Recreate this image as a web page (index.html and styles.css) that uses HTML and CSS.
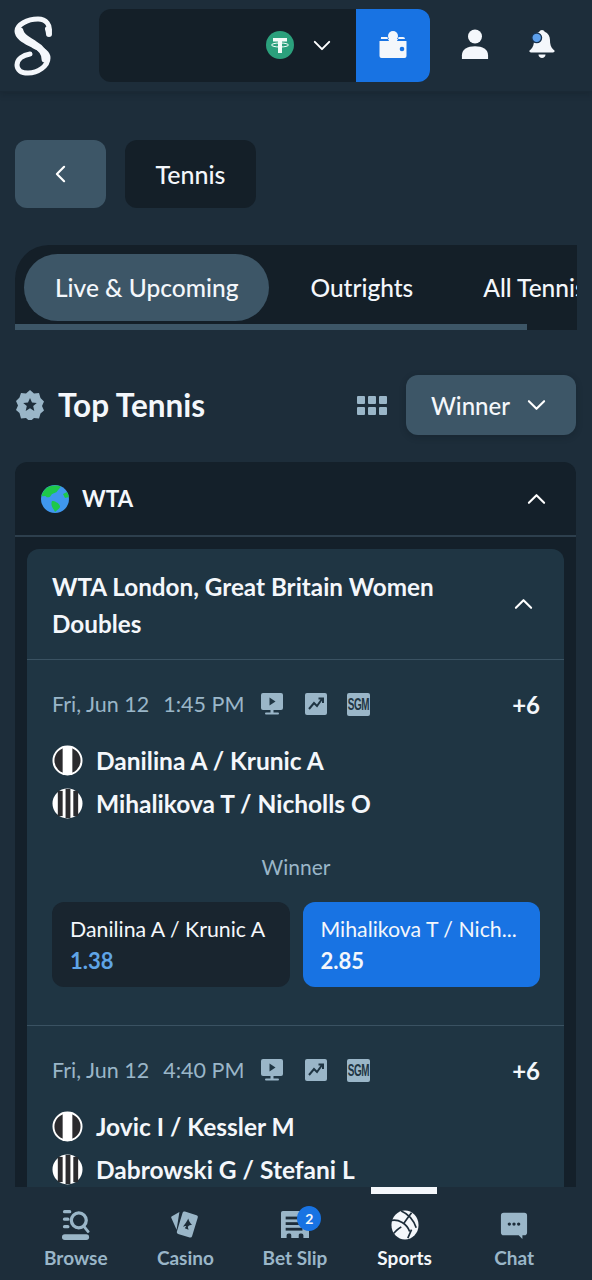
FILE: index.html
```html
<!DOCTYPE html>
<html lang="en">
<head>
    <meta charset="UTF-8">
    <meta name="viewport" content="width=device-width, initial-scale=1.0">
    <title>Top Tennis</title>
    <link rel="stylesheet" href="styles.css">
</head>
<body>
    <header class="topbar">
        <svg class="logo" viewBox="0 0 38 60" fill="none" stroke="#f4f7fb" stroke-width="5" stroke-linecap="round">
            <path d="M35 17C37 9 32 3 24 3C13 3 3 9 3 15C3 22 13 26 20 30C28 34 34 36 34 42C34 50 24 57 14 57C7 57 3 54 3 49C3 43 9 39 16 38"/>
            <path d="M6 15C7 21 14 24 20 28C27 32 31 37 31 43" stroke-width="7"/>
            <path d="M34 13C35 16 35 17 35 18" stroke-width="6"/>
        </svg>
        <div class="wallet">
            <div class="balance">
                <svg class="tether" viewBox="0 0 28 28">
                    <circle cx="14" cy="14" r="14" fill="#2ba07c"/>
                    <path d="M7 7h14v3.500h-5V22h-4V10.500H7z" fill="#f3fbf8"/>
                    <ellipse cx="14" cy="14" rx="8.500" ry="2" fill="none" stroke="#f3fbf8" stroke-width="1"/>
                </svg>
                <svg class="chev-sm" viewBox="0 0 20 12" fill="none" stroke="#fff" stroke-width="2.200" stroke-linecap="round" stroke-linejoin="round">
                    <path d="M2 2l8 8 8-8"/>
                </svg>
            </div>
            <div class="wallet-btn">
                <svg class="wallet-ico" viewBox="0 0 30 30">
                    <circle cx="15" cy="6" r="5" fill="#f4f7fb"/>
                    <path d="M3 7h6.500a5.500 5.500 0 0 0 11 0H25a2 2 0 0 1 2 2H3a2 2 0 0 1 0-1.500z" fill="#f4f7fb"/>
                    <path d="M1.500 11H28a.5.5 0 0 1 .5.5V26a2 2 0 0 1-2 2h-23a2 2 0 0 1-2-2z" fill="#f4f7fb"/>
                    <circle cx="24" cy="19" r="2.300" fill="#1873e3"/>
                </svg>
            </div>
        </div>
        <svg class="top-ico user-ico" viewBox="0 0 30 32" fill="#f4f7fb">
            <circle cx="15" cy="8" r="7.500"/>
            <path d="M1 32v-4c0-6 6-9.500 14-9.500S29 22 29 28v4z"/>
        </svg>
        <svg class="top-ico bell-ico" viewBox="0 0 30 34">
            <path d="M15 1c1.500 0 2.500 1 3 2 4 1.500 6 5 6 9 0 5 1 9 4 11.500 2 1 1.500 3-.5 3h-25c-2 0-2.500-2-.5-3C5 21 6 17 6 12c0-4 2-7.500 6-9 .5-1 1.500-2 3-2z" fill="#f4f7fb"/>
            <path d="M11 29h8c0 2.500-2 4-4 4s-4-1.500-4-4z" fill="#f4f7fb"/>
            <circle cx="9" cy="10" r="5.500" fill="#5c9fec" stroke="#17324f" stroke-width="1.500"/>
        </svg>
    </header>

    <main class="content">
        <div class="crumbs">
            <div class="back-btn">
                <svg class="chev-left" viewBox="0 0 12 20" fill="none" stroke="#fff" stroke-width="2.400" stroke-linecap="round" stroke-linejoin="round">
                    <path d="M10 2L2 10l8 8"/>
                </svg>
            </div>
            <div class="crumb">Tennis</div>
        </div>

        <div class="tabs">
            <div class="tab tab-active">Live &amp; Upcoming</div>
            <div class="tab">Outrights</div>
            <div class="tab">All Tennis</div>
            <div class="tabs-scroll"></div>
        </div>

        <div class="section-head">
            <svg class="badge-star" viewBox="0 0 28 30">
                <path d="M14 0l4 3.500 5-.5 1.500 5 3.500 3.500-2 4.500 2 4.500-3.500 3-1.500 5-5-.5-4 3.500-4-3.500-5 .5L3.500 23 0 20l2-4.500L0 11l3.500-3.500L5 3l5 .5z" fill="#9ab6c8"/>
                <path d="M14 8l2 4.500 4.800.4-3.600 3.200 1.100 4.800-4.300-2.600-4.300 2.600 1.100-4.800-3.600-3.200 4.800-.4z" fill="#1d2d3a"/>
            </svg>
            <h1 class="section-title">Top Tennis</h1>
            <div class="grid-ico">
                <span></span><span></span><span></span>
                <span></span><span></span><span></span>
            </div>
            <div class="market-select">
                Winner
                <svg class="chev-md" viewBox="0 0 20 12" fill="none" stroke="#fff" stroke-width="2.200" stroke-linecap="round" stroke-linejoin="round">
                    <path d="M2 2l8 8 8-8"/>
                </svg>
            </div>
        </div>

        <section class="league">
            <div class="league-head">
                <svg class="globe" viewBox="0 0 28 28">
                    <circle cx="14" cy="14" r="14" fill="#3f97ee"/>
                    <path d="M8 1.500C12 0 17 0 20 1.500c-1 2-3 3-4 5-1.500 2-5 1.500-6 4-1 2-4 2.500-5 1C3.500 10 2 12 .5 11 1.500 7 4 3.500 8 1.500z" fill="#1ec84a"/>
                    <path d="M11 16c3 0 7 2 8 5 .5 2-3 4-5 6-1-3-5-6-3-11z" fill="#1ec84a"/>
                    <path d="M22 9l4-2 2 5-4 1z" fill="#1ec84a"/>
                </svg>
                <span class="league-name">WTA</span>
                <svg class="chev-md" viewBox="0 0 20 12" fill="none" stroke="#fff" stroke-width="2.200" stroke-linecap="round" stroke-linejoin="round">
                    <path d="M2 10l8-8 8 8"/>
                </svg>
            </div>

            <div class="event">
                <div class="event-head">
                    <h2 class="event-title">WTA London, Great Britain Women Doubles</h2>
                    <svg class="chev-md" viewBox="0 0 20 12" fill="none" stroke="#fff" stroke-width="2.200" stroke-linecap="round" stroke-linejoin="round">
                        <path d="M2 10l8-8 8 8"/>
                    </svg>
                </div>

                <div class="match">
                    <div class="match-meta">
                        <span class="match-date">Fri, Jun 12</span>
                        <span class="match-time">1:45 PM</span>
                        <svg class="meta-ico ico-tv" viewBox="0 0 24 24">
                            <rect x="1" y="1" width="22" height="17" rx="2" fill="#9ab6c8"/>
                            <path d="M9.500 5.500l6 4-6 4z" fill="#1f3543"/>
                            <rect x="10.500" y="18" width="3" height="3" fill="#9ab6c8"/>
                            <rect x="5" y="20.500" width="14" height="2" rx="1" fill="#9ab6c8"/>
                        </svg>
                        <svg class="meta-ico ico-chart" viewBox="0 0 24 24">
                            <rect x="1" y="1" width="22" height="22" rx="2" fill="#9ab6c8"/>
                            <path d="M5 17l5-6 3 3 5-7M14.500 6.500H19V11" fill="none" stroke="#1f3543" stroke-width="2"/>
                        </svg>
                        <span class="sgm"><span class="sgm-text">SGM</span></span>
                        <span class="more">+6</span>
                    </div>
                    <div class="team team-first">
                        <svg class="jersey" viewBox="0 0 32 32">
                            <circle cx="16" cy="16" r="14.500" fill="#2b2b2e" stroke="#fff" stroke-width="2"/>
                            <rect x="11" y="1" width="10" height="30" fill="#fff"/>
                        </svg>
                        <span>Danilina A / Krunic A</span>
                    </div>
                    <div class="team">
                        <svg class="jersey" viewBox="0 0 32 32">
                            <circle cx="16" cy="16" r="14.500" fill="#fff" stroke="#fff" stroke-width="2"/>
                            <rect x="6" y="3" width="5" height="26" fill="#2b2b2e"/>
                            <rect x="14" y="1" width="5" height="30" fill="#2b2b2e"/>
                            <rect x="22" y="3" width="5" height="26" fill="#2b2b2e"/>
                        </svg>
                        <span>Mihalikova T / Nicholls O</span>
                    </div>
                    <div class="market-label">Winner</div>
                    <div class="odds">
                        <div class="odd">
                            <span class="odd-name">Danilina A / Krunic A</span>
                            <span class="odd-price">1.38</span>
                        </div>
                        <div class="odd odd-selected">
                            <span class="odd-name">Mihalikova T / Nich...</span>
                            <span class="odd-price">2.85</span>
                        </div>
                    </div>
                </div>

                <div class="match">
                    <div class="match-meta">
                        <span class="match-date">Fri, Jun 12</span>
                        <span class="match-time">4:40 PM</span>
                        <svg class="meta-ico ico-tv" viewBox="0 0 24 24">
                            <rect x="1" y="1" width="22" height="17" rx="2" fill="#9ab6c8"/>
                            <path d="M9.500 5.500l6 4-6 4z" fill="#1f3543"/>
                            <rect x="10.500" y="18" width="3" height="3" fill="#9ab6c8"/>
                            <rect x="5" y="20.500" width="14" height="2" rx="1" fill="#9ab6c8"/>
                        </svg>
                        <svg class="meta-ico ico-chart" viewBox="0 0 24 24">
                            <rect x="1" y="1" width="22" height="22" rx="2" fill="#9ab6c8"/>
                            <path d="M5 17l5-6 3 3 5-7M14.500 6.500H19V11" fill="none" stroke="#1f3543" stroke-width="2"/>
                        </svg>
                        <span class="sgm"><span class="sgm-text">SGM</span></span>
                        <span class="more">+6</span>
                    </div>
                    <div class="team team-first">
                        <svg class="jersey" viewBox="0 0 32 32">
                            <circle cx="16" cy="16" r="14.500" fill="#2b2b2e" stroke="#fff" stroke-width="2"/>
                            <rect x="11" y="1" width="10" height="30" fill="#fff"/>
                        </svg>
                        <span>Jovic I / Kessler M</span>
                    </div>
                    <div class="team">
                        <svg class="jersey" viewBox="0 0 32 32">
                            <circle cx="16" cy="16" r="14.500" fill="#fff" stroke="#fff" stroke-width="2"/>
                            <rect x="6" y="3" width="5" height="26" fill="#2b2b2e"/>
                            <rect x="14" y="1" width="5" height="30" fill="#2b2b2e"/>
                            <rect x="22" y="3" width="5" height="26" fill="#2b2b2e"/>
                        </svg>
                        <span>Dabrowski G / Stefani L</span>
                    </div>
                </div>
            </div>
        </section>
    </main>

    <nav class="bottom-nav">
        <div class="nav-item">
            <svg class="nav-ico" viewBox="0 0 30 32">
                <rect x="1" y="0" width="9" height="3.500" rx="1.700" fill="#9ab6c8"/>
                <rect x="1" y="8" width="7" height="3.500" rx="1.700" fill="#9ab6c8"/>
                <rect x="1" y="16" width="7" height="3.500" rx="1.700" fill="#9ab6c8"/>
                <rect x="0" y="26" width="29" height="6" rx="3" fill="#9ab6c8"/>
                <circle cx="18" cy="11" r="8" fill="none" stroke="#9ab6c8" stroke-width="3.500"/>
                <path d="M23 17l5 6" stroke="#9ab6c8" stroke-width="3" stroke-linecap="round"/>
            </svg>
            <span>Browse</span>
        </div>
        <div class="nav-item">
            <svg class="nav-ico" viewBox="0 0 30 32">
                <path d="M9 2L1 6.500a1.500 1.500 0 0 0-.6 2L6 21z" fill="#9ab6c8"/>
                <rect x="9" y="3" width="17" height="25" rx="2" fill="#9ab6c8" transform="rotate(17 17.500 15.500)"/>
                <path d="M18.500 9c.8 3 2 5 4 7-2.500-.5-3.500.5-4.500 2l.8 3-4-1.500 1.500-2.500c-1 0-2.500.5-3.500 1 2-3 4.500-6 5.700-9z" fill="#1d2d3a"/>
            </svg>
            <span>Casino</span>
        </div>
        <div class="nav-item">
            <span class="nav-badge">2</span>
            <svg class="nav-ico" viewBox="0 0 30 32">
                <path d="M2 1h26a2 2 0 0 1 2 2v27h-6v-3a2 2 0 0 0-2-2h-1.500c-1 0-1.500 1-1.500 2v3h-8v-3c0-1-.5-2-1.500-2H8a2 2 0 0 0-2 2v3H0V3a2 2 0 0 1 2-2z" fill="#9ab6c8"/>
                <rect x="5" y="7" width="18" height="3" fill="#1d2d3a"/>
                <rect x="5" y="13" width="18" height="3" fill="#1d2d3a"/>
                <rect x="5" y="19" width="18" height="3" fill="#1d2d3a"/>
            </svg>
            <span>Bet Slip</span>
        </div>
        <div class="nav-item nav-active">
            <svg class="nav-ico" viewBox="0 0 30 32">
                <ellipse cx="15" cy="16" rx="14.500" ry="15.500" fill="#f4f7fb"/>
                <path d="M1 11c7-1 16 3 19 12M11 1c7 3 13 9 16 18M22 3c-3 4-6 8-8 11M22 21l-4 9M3 25c2-3 5-5 8-7" fill="none" stroke="#1d2d3a" stroke-width="1.800"/>
            </svg>
            <span>Sports</span>
        </div>
        <div class="nav-item">
            <svg class="nav-ico" viewBox="0 0 30 32">
                <path d="M4 3h22a3 3 0 0 1 3 3v18a3 3 0 0 1-3 3h-2v4l-4-4H4a3 3 0 0 1-3-3V6a3 3 0 0 1 3-3z" fill="#9ab6c8"/>
                <circle cx="10" cy="15" r="1.800" fill="#1d2d3a"/>
                <circle cx="15" cy="15" r="1.800" fill="#1d2d3a"/>
                <circle cx="20" cy="15" r="1.800" fill="#1d2d3a"/>
            </svg>
            <span>Chat</span>
        </div>
    </nav>
</body>
</html>
```

FILE: styles.css
```css
* {
    box-sizing: border-box;
}
html, body {
    margin: 0;
    height: 1280px;
    overflow: hidden;
}
body {
    display: flex;
    flex-direction: column;
    font-family: "Lato", "Noto Sans", sans-serif;
    color: #f4f7fb;
    background-color: #1d2d3a;
}
svg {
    display: block;
    flex: none;
}

/* top bar */
.topbar {
    display: flex;
    align-items: center;
    flex: none;
    height: 92px;
    padding: 0 0 0 14px;
    border-bottom: 1px solid #1a2935;
    box-shadow: 0 2px 6px rgba(10, 20, 28, 0.25);
}
.logo {
    width: 38px;
    height: 60px;
    margin-top: 1px;
}
.wallet {
    display: flex;
    width: 331px;
    height: 73px;
    margin: -1px 0 0 47px;
    border-radius: 12px;
    overflow: hidden;
    background-color: #141f28;
}
.balance {
    display: flex;
    align-items: center;
    justify-content: flex-end;
    flex: 1;
    padding-right: 25px;
}
.tether {
    width: 28px;
    height: 28px;
    margin-right: 19px;
}
.chev-sm {
    width: 18px;
    height: 11px;
}
.wallet-btn {
    display: flex;
    align-items: center;
    justify-content: center;
    width: 74px;
    background-color: #1873e3;
}
.wallet-ico {
    width: 30px;
    height: 30px;
}
.top-ico {
    width: 28px;
    height: 30px;
    margin-top: -3px;
}
.user-ico {
    margin-left: 31px;
}
.bell-ico {
    margin-left: 39px;
}

/* main column */
.content {
    flex: 1;
    min-height: 0;
    overflow: hidden;
    padding: 48px 15px 0;
}
.crumbs {
    display: flex;
    gap: 19px;
}
.back-btn {
    display: flex;
    align-items: center;
    justify-content: center;
    width: 91px;
    height: 68px;
    border-radius: 12px;
    background-color: #3d5667;
}
.chev-left {
    width: 11px;
    height: 18px;
}
.crumb {
    display: flex;
    align-items: center;
    justify-content: center;
    width: 131px;
    height: 68px;
    border-radius: 12px;
    font-size: 25px;
    font-weight: 500;
    background-color: #141f28;
}

/* tabs */
.tabs {
    position: relative;
    display: flex;
    align-items: center;
    width: 562px;
    height: 85px;
    margin-top: 37px;
    padding: 0 0 0 9px;
    overflow: hidden;
    white-space: nowrap;
    border-radius: 34px 0 0 0;
    background-color: #141f28;
}
.tab {
    flex: none;
    height: 67px;
    padding: 0 35px;
    font-size: 24.500px;
    font-weight: 500;
    line-height: 67px;
}
.tab-active {
    margin-right: 6px;
    padding: 0 31px;
    border-radius: 34px;
    background-color: #3d5667;
}
.tabs-scroll {
    position: absolute;
    left: 0;
    bottom: 0;
    width: 512px;
    height: 6px;
    background-color: #3d5667;
}

/* section heading */
.section-head {
    display: flex;
    align-items: center;
    height: 60px;
    margin-top: 45px;
    padding: 0 1px;
}
.badge-star {
    width: 28px;
    height: 30px;
}
.section-title {
    flex: 1;
    margin: 0 0 0 14px;
    font-size: 31.500px;
    font-weight: 700;
}
.grid-ico {
    display: grid;
    grid-template-columns: repeat(3, 8px);
    grid-auto-rows: 8px;
    gap: 3px;
    margin-right: 19px;
}
.grid-ico span {
    border-radius: 1px;
    background-color: #9ab6c8;
}
.market-select {
    display: flex;
    align-items: center;
    justify-content: space-between;
    width: 170px;
    height: 60px;
    padding: 0 30px 0 25px;
    border-radius: 12px;
    font-size: 24px;
    font-weight: 500;
    background-color: #3d5667;
    box-shadow: 0 2px 6px rgba(10, 20, 28, 0.25);
}
.chev-md {
    width: 19px;
    height: 12px;
}

/* league card */
.league {
    width: 561px;
    height: 800px;
    margin-top: 27px;
    border-radius: 12px 12px 0 0;
    background-color: #14202a;
}
.league-head {
    display: flex;
    align-items: center;
    height: 75px;
    padding: 0 30px 0 26px;
    border-bottom: 2px solid #2d3f4d;
}
.globe {
    width: 28px;
    height: 28px;
}
.league-name {
    flex: 1;
    margin-left: 13px;
    font-size: 22.500px;
    font-weight: 700;
}
.event {
    margin: 12px 12px 0;
    border-radius: 12px 12px 0 0;
    background-color: #1f3543;
}
.event-head {
    display: flex;
    align-items: center;
    justify-content: space-between;
    height: 111px;
    padding: 0 31px 0 25px;
    border-bottom: 1px solid #3a5262;
}
.event-title {
    width: 420px;
    margin: 1px 0 0;
    font-size: 24.250px;
    font-weight: 700;
    line-height: 37px;
}

/* matches */
.match {
    height: 366px;
    padding: 28px 24px 0 25px;
    border-bottom: 1px solid #3a5262;
}
.match-meta {
    display: flex;
    align-items: center;
    height: 32px;
    font-size: 21.500px;
    color: #9ab6c8;
}
.match-time {
    margin-left: 14px;
}
.meta-ico {
    width: 24px;
    height: 24px;
}
.ico-tv {
    margin-left: 16px;
}
.ico-chart {
    margin-left: 20px;
}
.sgm {
    display: flex;
    align-items: center;
    justify-content: center;
    width: 23px;
    height: 23px;
    margin-left: 19px;
    overflow: hidden;
    border-radius: 2px;
    background-color: #9ab6c8;
}
.sgm-text {
    flex: none;
    font-family: "Liberation Sans", sans-serif;
    font-size: 16px;
    font-weight: 700;
    line-height: 23px;
    letter-spacing: -0.5px;
    color: #1f3543;
    transform: scaleX(0.62);
}
.more {
    margin-left: auto;
    font-size: 24px;
    font-weight: 700;
    color: #f4f7fb;
}
.team {
    display: flex;
    align-items: center;
    gap: 13px;
    height: 43px;
    font-size: 24.500px;
    font-weight: 700;
}
.team-first {
    margin-top: 19px;
}
.jersey {
    width: 31px;
    height: 31px;
}
.market-label {
    margin-top: 28px;
    font-size: 21px;
    line-height: 28px;
    text-align: center;
    color: #9ab6c8;
}
.odds {
    display: grid;
    grid-template-columns: 1fr 1fr;
    gap: 13px;
    margin-top: 21px;
}
.odd {
    display: flex;
    flex-direction: column;
    justify-content: center;
    gap: 5px;
    height: 85px;
    min-width: 0;
    padding: 0 18px;
    border-radius: 12px;
    font-size: 21.300px;
    background-color: #19252f;
}
.odd-name {
    white-space: nowrap;
}
.odd-price {
    font-size: 22px;
    font-weight: 700;
    color: #5fa4e6;
}
.odd-selected {
    background-color: #1873e3;
}
.odd-selected .odd-price {
    color: #f4f7fb;
}

/* bottom nav */
.bottom-nav {
    position: relative;
    display: grid;
    grid-template-columns: repeat(5, 1fr);
    flex: none;
    height: 93px;
    padding: 0 23px 0 21px;
    background-color: #1d2d3a;
}
.nav-item {
    position: relative;
    display: flex;
    flex-direction: column;
    align-items: center;
    padding-top: 23px;
    font-size: 19px;
    font-weight: 700;
    color: #9ab6c8;
}
.nav-ico {
    width: 28px;
    height: 30px;
    margin-bottom: 6px;
}
.nav-active {
    color: #f4f7fb;
}
.nav-active::before {
    content: "";
    position: absolute;
    top: 0;
    left: 21px;
    right: 22px;
    height: 7px;
    background-color: #f4f7fb;
}
.nav-badge {
    position: absolute;
    top: 19px;
    left: 57px;
    z-index: 1;
    width: 24px;
    height: 25px;
    border-radius: 50%;
    font-size: 14px;
    line-height: 25px;
    text-align: center;
    color: #f4f7fb;
    background-color: #1873e3;
}
```
